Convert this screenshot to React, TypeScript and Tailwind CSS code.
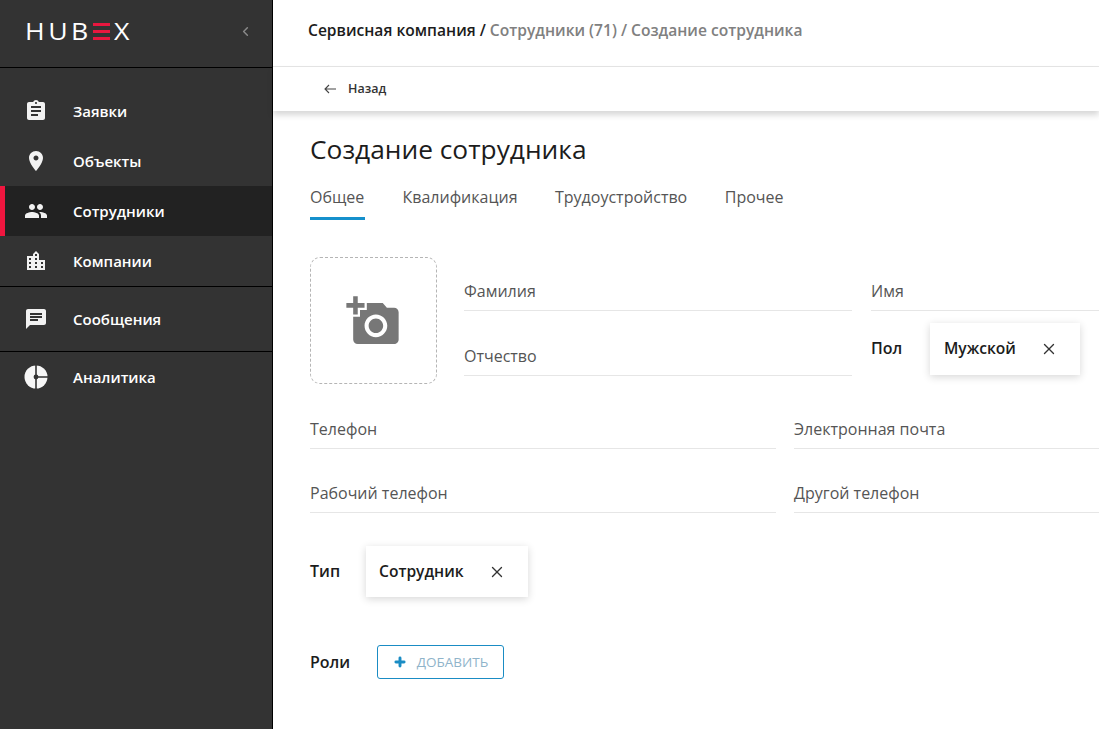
import { ChevronLeft, Plus, X } from 'lucide-react';

const font = { fontFamily: '"Open Sans", "Noto Sans", sans-serif' };

// material icon paths
const icons = {
  assignment:
    'M19 3h-4.18C14.4 1.84 13.3 1 12 1c-1.3 0-2.4.84-2.82 2H5c-1.1 0-2 .9-2 2v14c0 1.1.9 2 2 2h14c1.1 0 2-.9 2-2V5c0-1.1-.9-2-2-2zm-7 0c.55 0 1 .45 1 1s-.45 1-1 1-1-.45-1-1 .45-1 1-1zm2 14H7v-2h7v2zm3-4H7v-2h10v2zm0-4H7V7h10v2z',
  place:
    'M12 2C8.13 2 5 5.13 5 9c0 5.25 7 13 7 13s7-7.75 7-13c0-3.87-3.13-7-7-7zm0 9.5c-1.38 0-2.5-1.12-2.5-2.5s1.12-2.5 2.5-2.5 2.5 1.12 2.5 2.5-1.12 2.5-2.5 2.5z',
  people:
    'M16 11c1.66 0 2.99-1.34 2.99-3S17.66 5 16 5c-1.66 0-3 1.34-3 3s1.34 3 3 3zm-8 0c1.66 0 2.99-1.34 2.99-3S9.66 5 8 5C6.34 5 5 6.34 5 8s1.34 3 3 3zm0 2c-2.33 0-7 1.17-7 3.5V19h14v-2.5c0-2.33-4.67-3.5-7-3.5zm8 0c-.29 0-.62.02-.97.05 1.16.84 1.97 1.97 1.97 3.45V19h6v-2.5c0-2.33-4.67-3.5-7-3.5z',
  city:
    'M15 11V5l-3-3-3 3v2H3v14h18V11h-6zm-8 8H5v-2h2v2zm0-4H5v-2h2v2zm0-4H5V9h2v2zm6 8h-2v-2h2v2zm0-4h-2v-2h2v2zm0-4h-2V9h2v2zm0-4h-2V5h2v2zm6 12h-2v-2h2v2zm0-4h-2v-2h2v2z',
  chat:
    'M20 2H4c-1.1 0-1.99.9-1.99 2L2 22l4-4h14c1.1 0 2-.9 2-2V4c0-1.1-.9-2-2-2zM6 9h12v2H6V9zm8 5H6v-2h8v2zm4-6H6V6h12v2z',
  addPhoto:
    'M3 4V1h2v3h3v2H5v3H3V6H0V4h3zm3 6V7h3V4h7l1.83 2H21c1.1 0 2 .9 2 2v12c0 1.1-.9 2-2 2H5c-1.1 0-2-.9-2-2V10h3zm7 9c2.76 0 5-2.24 5-5s-2.24-5-5-5-5 2.24-5 5 2.24 5 5 5zm-3.2-5c0 1.77 1.43 3.2 3.2 3.2s3.2-1.43 3.2-3.2-1.43-3.2-3.2-3.2-3.2 1.43-3.2 3.2z',
};

function Icon({ d }: { d: string }) {
  return (
    <svg viewBox="0 0 24 24" className="h-6 w-6 fill-[#f2f2f2]">
      <path d={d} />
    </svg>
  );
}

function PieIcon() {
  return (
    <svg viewBox="0 0 24 24" className="h-6 w-6">
      <circle cx="12" cy="12" r="11.5" fill="#f7f7f7" />
      <path d="M12 0v24M12 12h12" stroke="#333333" strokeWidth="1.6" />
      <circle cx="12" cy="12" r="2.4" fill="#333333" />
    </svg>
  );
}

function NavItem({
  label,
  icon,
  active,
  tall,
}: {
  label: string;
  icon: React.ReactNode;
  active?: boolean;
  tall?: boolean;
}) {
  return (
    <div
      className={`flex items-center border-l-[5px] pl-[19px] ${tall ? 'h-16' : 'h-[50px]'} ${
        active ? 'border-[#f0163f] bg-[#222222]' : 'border-transparent'
      }`}
    >
      <div className="flex w-6 justify-center">{icon}</div>
      <span className="ml-[25px] pt-px text-[15px] font-semibold text-white">{label}</span>
    </div>
  );
}

function Logo() {
  return (
    <div className="flex items-center text-white">
      <div className="w-[68px] text-[23px] leading-none">
        <span className="inline-block origin-left scale-x-[1.16] tracking-[3px]">HUB</span>
      </div>
      <div className="flex h-[17px] w-[17px] flex-col justify-between">
        <div className="h-[3px] bg-[#e8173f]" />
        <div className="h-[3px] bg-[#e8173f]" />
        <div className="h-[3px] bg-[#e8173f]" />
      </div>
      <div className="ml-1 w-[17px] text-[23px] leading-none">
        <span className="inline-block origin-left scale-x-[1.16]">X</span>
      </div>
    </div>
  );
}

function Sidebar() {
  return (
    <aside className="flex h-full w-[273px] shrink-0 flex-col border-r border-black bg-[#333333]">
      <div className="flex h-[68px] items-center justify-between border-b border-black pr-[19px] pb-1 pl-[25px]">
        <Logo />
        <ChevronLeft size={15} strokeWidth={2.4} className="text-[#8a8a8a]" />
      </div>
      <nav className="pt-[18px]">
        <NavItem label="Заявки" icon={<Icon d={icons.assignment} />} />
        <NavItem label="Объекты" icon={<Icon d={icons.place} />} />
        <NavItem label="Сотрудники" icon={<Icon d={icons.people} />} active />
        <NavItem label="Компании" icon={<Icon d={icons.city} />} />
        <div className="border-y border-black">
          <NavItem label="Сообщения" icon={<Icon d={icons.chat} />} tall />
        </div>
        <NavItem label="Аналитика" icon={<PieIcon />} />
      </nav>
    </aside>
  );
}

function Field({ label, className }: { label: string; className: string }) {
  return (
    <div
      className={`flex h-[38px] items-center border-b border-[#e6e6e6] pb-[2px] text-base text-[#555555] ${className}`}
    >
      {label}
    </div>
  );
}

function Chip({ label, className }: { label: string; className: string }) {
  return (
    <div
      className={`flex items-center justify-between bg-white font-semibold text-[#1c1c1c] shadow-[0_2px_8px_rgba(0,0,0,0.16)] ${className}`}
    >
      <span className="text-[15.6px]">{label}</span>
      <X size={18} strokeWidth={1.8} className="text-[#333333]" />
    </div>
  );
}

export default function App() {
  return (
    <div className="flex h-[729px] w-[1099px] overflow-hidden bg-white" style={font}>
      <Sidebar />
      <main className="min-w-0 flex-1">
        <div className="flex h-[67px] items-center border-b border-[#e6e6e6] pb-1 pl-[35px] text-[15.6px] font-semibold whitespace-nowrap text-[#808080]">
          <span className="text-[#1c1c1c]">Сервисная компания /</span>
          <span>&nbsp;Сотрудники (71) / Создание сотрудника</span>
        </div>
        <div className="flex h-[44px] items-center pl-[51px] text-[12.5px] font-semibold text-[#333333] shadow-[0_4px_6px_rgba(0,0,0,0.16)]">
          <svg viewBox="0 0 12 10" className="mr-3 h-[10px] w-3 fill-none stroke-[#444444]">
            <path d="M12 5H1M5 1 1 5l4 4" strokeWidth="1.1" />
          </svg>
          Назад
        </div>

        <div className="pl-[37px]">
          <h1 className="mt-[21px] text-[26.3px] leading-[34px] font-normal text-[#1c1c1c]">Создание сотрудника</h1>

          <div className="mt-[19px] flex gap-[37.5px] text-base text-[#555555]">
            <div className="h-[35px] w-[55px] border-b-[3px] border-[#1590cc] leading-[24px]">Общее</div>
            <div className="leading-[24px]">Квалификация</div>
            <div className="leading-[24px]">Трудоустройство</div>
            <div className="leading-[24px]">Прочее</div>
          </div>

          <div className="mt-[37px] flex">
            <div className="flex h-[127px] w-[127px] shrink-0 items-center justify-center rounded-[10px] border border-dashed border-[#b5b5b5] pr-[2px] pb-[3px]">
              <svg viewBox="0 0 23 22" className="h-[50px] w-[53px] fill-[#777777]">
                <path d={icons.addPhoto} />
              </svg>
            </div>
            <div className="ml-[27px] w-[388px] shrink-0 pt-4">
              <Field label="Фамилия" className="" />
              <Field label="Отчество" className="mt-[27px]" />
            </div>
            <div className="ml-[19px] w-[300px] shrink-0 pt-4">
              <Field label="Имя" className="" />
              <div className="mt-3 flex items-center">
                <span className="w-[59px] pb-[2px] text-base font-semibold text-[#1c1c1c]">Пол</span>
                <Chip label="Мужской" className="h-[52px] w-[150px] pr-[22px] pl-[14px]" />
              </div>
            </div>
          </div>

          <div className="mt-[27px] grid w-[800px] grid-cols-[466px_306px] gap-x-[18px] gap-y-[26px]">
            <Field label="Телефон" className="" />
            <Field label="Электронная почта" className="" />
            <Field label="Рабочий телефон" className="" />
            <Field label="Другой телефон" className="" />
          </div>

          <div className="mt-[33px] flex items-center">
            <span className="w-14 pb-[2px] text-base font-semibold text-[#1c1c1c]">Тип</span>
            <Chip label="Сотрудник" className="h-[51px] w-[162px] pr-[22px] pl-[13px]" />
          </div>

          <div className="mt-12 flex items-center">
            <span className="w-[67px] text-base font-semibold text-[#1c1c1c]">Роли</span>
            <button className="flex h-[34px] w-[127px] items-center justify-center gap-[10px] rounded-[3px] border border-[#1a8cc4] text-[13.5px] text-[#8fb4ca]">
              <Plus size={14} strokeWidth={5} className="text-[#1a8cc4]" />
              ДОБАВИТЬ
            </button>
          </div>
        </div>
      </main>
    </div>
  );
}
